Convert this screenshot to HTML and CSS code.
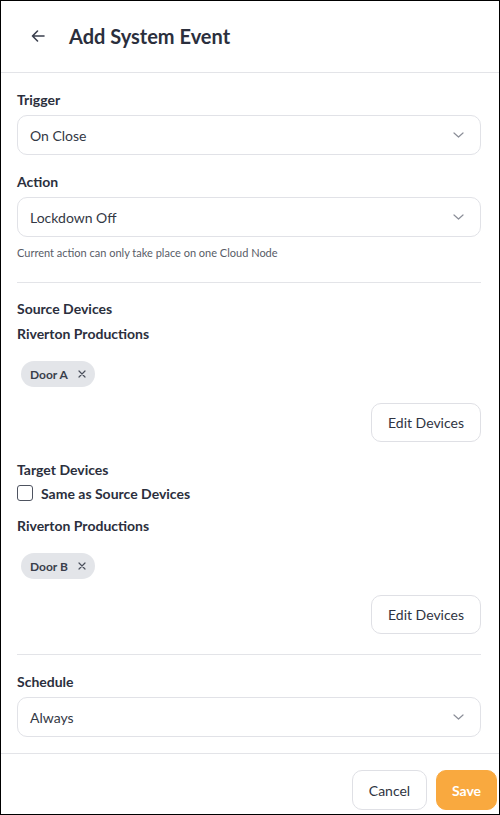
FILE: index.html
```html
<!DOCTYPE html>
<html lang="en">
<head>
  <meta charset="UTF-8">
  <meta name="viewport" content="width=device-width, initial-scale=1.0">
  <title>Add System Event</title>
  <link rel="stylesheet" href="styles.css">
</head>

<body>
  <div class="panel">
    <header class="panel-header">
      <svg class="back" width="14" height="12" viewBox="0 0 14 12" aria-hidden="true">
        <path d="M13 6H1.5M6.5 1L1.5 6l5 5" fill="none" stroke="#3a3f4d" stroke-width="1.6" stroke-linecap="round" stroke-linejoin="round"/>
      </svg>
      <h1>Add System Event</h1>
    </header>

    <main class="panel-body">
      <section class="group">
        <div class="label">Trigger</div>
        <div class="select">
          <span>On Close</span>
          <svg class="chev" width="11" height="6" viewBox="0 0 11 6"><path d="M1 1l4.5 4L10 1" fill="none" stroke="#8b8e98" stroke-width="1.2" stroke-linecap="round" stroke-linejoin="round"/></svg>
        </div>

        <div class="label label-gap">Action</div>
        <div class="select">
          <span>Lockdown Off</span>
          <svg class="chev" width="11" height="6" viewBox="0 0 11 6"><path d="M1 1l4.5 4L10 1" fill="none" stroke="#8b8e98" stroke-width="1.2" stroke-linecap="round" stroke-linejoin="round"/></svg>
        </div>
        <p class="hint">Current action can only take place on one Cloud Node</p>
      </section>

      <hr class="divider divider-first">

      <section class="group">
        <div class="label">Source Devices</div>
        <div class="label org">Riverton Productions</div>
        <div class="chips">
          <span class="chip">Door A
            <svg width="8" height="8" viewBox="0 0 8 8"><path d="M1 1l6 6M7 1L1 7" stroke="#4a4f5b" stroke-width="1.2" stroke-linecap="round"/></svg>
          </span>
        </div>
        <div class="actions">
          <button class="btn" type="button">Edit Devices</button>
        </div>

        <div class="label target">Target Devices</div>
        <label class="check">
          <span class="box"></span>
          <span>Same as Source Devices</span>
        </label>
        <div class="label org org-target">Riverton Productions</div>
        <div class="chips">
          <span class="chip">Door B
            <svg width="8" height="8" viewBox="0 0 8 8"><path d="M1 1l6 6M7 1L1 7" stroke="#4a4f5b" stroke-width="1.2" stroke-linecap="round"/></svg>
          </span>
        </div>
        <div class="actions">
          <button class="btn" type="button">Edit Devices</button>
        </div>
      </section>

      <hr class="divider divider-second">

      <section class="group">
        <div class="label">Schedule</div>
        <div class="select">
          <span>Always</span>
          <svg class="chev" width="11" height="6" viewBox="0 0 11 6"><path d="M1 1l4.5 4L10 1" fill="none" stroke="#8b8e98" stroke-width="1.2" stroke-linecap="round" stroke-linejoin="round"/></svg>
        </div>
      </section>
    </main>

    <footer class="panel-footer">
      <button class="btn btn-cancel" type="button">Cancel</button>
      <button class="btn btn-save" type="button">Save</button>
    </footer>
  </div>
</body>
</html>
```

FILE: styles.css
```css
* {
  box-sizing: border-box;
}
body {
  margin: 0;
  font-family: Lato, "Noto Sans", sans-serif;
  color: #2b2f3d;
  background: #fff;
}
.panel {
  width: 500px;
  height: 815px;
  border: 1px solid #000;
  display: flex;
  flex-direction: column;
  background: #fff;
}
.panel-header {
  height: 72px;
  flex: none;
  display: flex;
  align-items: center;
  padding: 0 0 2px 30px;
  border-bottom: 1px solid #e3e4e8;
}
.back {
  margin-right: 24px;
}
h1 {
  margin: 0;
  font-size: 20px;
  font-weight: 700;
  color: #2b2f3d;
}
.panel-body {
  flex: 1;
  overflow: hidden;
  padding: 17px 18px 0 16px;
}
.label {
  font-size: 14px;
  line-height: 20px;
  font-weight: 700;
  margin-bottom: 5px;
}
.label-gap {
  margin-top: 17px;
}
.select {
  height: 40px;
  border: 1px solid #e1e2e7;
  border-radius: 10px;
  display: flex;
  align-items: center;
  justify-content: space-between;
  padding: 0 16px 0 12px;
  font-size: 14px;
  color: #333845;
}
.hint {
  margin: 9px 0 0;
  font-size: 11px;
  line-height: 14px;
  color: #585c67;
}
.divider {
  border: 0;
  border-top: 1px solid #e3e4e8;
  margin: 0;
}
.divider-first {
  margin-top: 22px;
  margin-bottom: 16px;
}
.divider-second {
  margin-top: 20px;
  margin-bottom: 17px;
}
.org {
  margin-top: 3px;
  margin-bottom: 0;
}
.chips {
  margin-top: 17px;
  padding-left: 4px;
}
.chip {
  display: inline-flex;
  align-items: center;
  gap: 10px;
  height: 26px;
  padding: 0 9px;
  border-radius: 13px;
  background: #e3e5e9;
  font-size: 12px;
  font-weight: 700;
  color: #3a3f4b;
}
.actions {
  display: flex;
  justify-content: flex-end;
  margin-top: 16px;
}
.btn {
  height: 39px;
  padding: 0 16px;
  border: 1px solid #dfe0e5;
  border-radius: 10px;
  background: #fff;
  font-family: inherit;
  font-size: 14px;
  color: #2f3442;
}
.target {
  margin-top: 18px;
  margin-bottom: 0;
}
.check {
  display: flex;
  align-items: center;
  gap: 8px;
  height: 20px;
  margin-top: 3px;
  font-size: 14px;
  font-weight: 700;
}
.box {
  width: 16px;
  height: 16px;
  border: 1.5px solid #4e5360;
  border-radius: 3px;
}
.org-target {
  margin-top: 13px;
}
.panel-footer {
  flex: none;
  height: 61px;
  border-top: 1px solid #e3e4e8;
  display: flex;
  justify-content: flex-end;
  gap: 9px;
  padding: 16px 2px 0 0;
}
.panel-footer .btn {
  height: 40px;
}
.btn-cancel {
  width: 75px;
  padding: 0;
}
.btn-save {
  width: 61px;
  padding: 0;
  border-color: #f9a93f;
  background: #f9a93f;
  color: #fff;
  font-weight: 700;
}
```
